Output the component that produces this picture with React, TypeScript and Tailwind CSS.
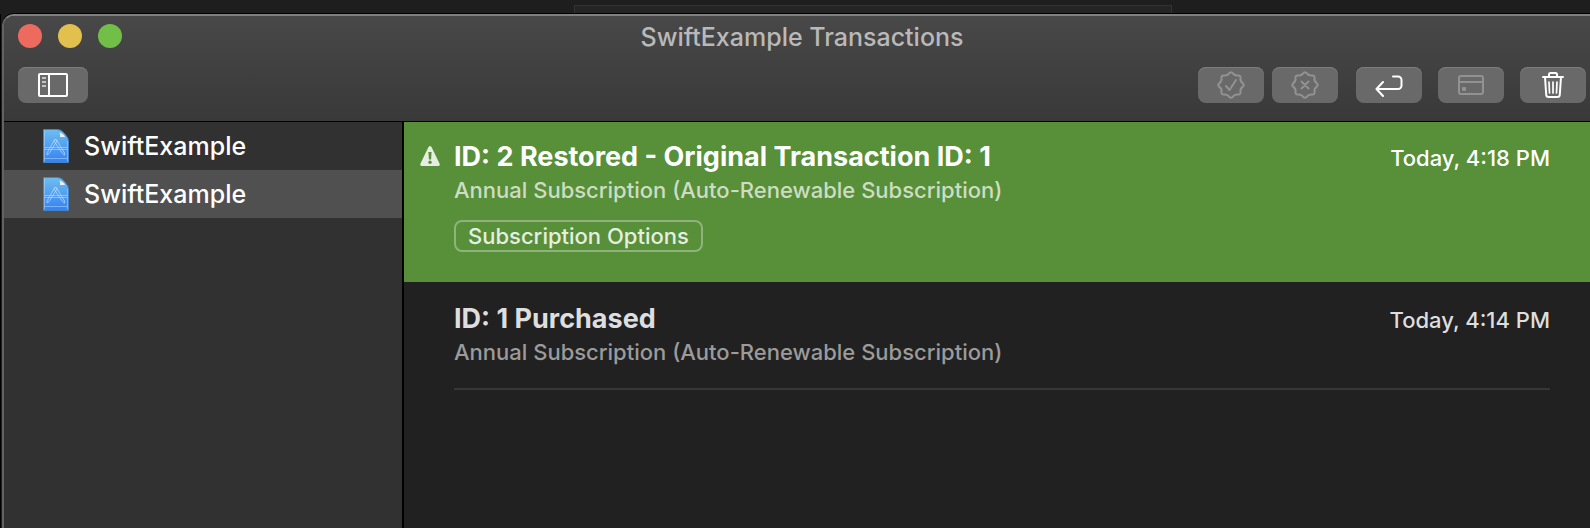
import type { ReactNode } from 'react'
import clsx from 'clsx'

interface Transaction {
  title: string
  subtitle: string
  date: string
  selected: boolean
  subscription: boolean
}

const apps = [
  { id: 1, name: 'SwiftExample', selected: false },
  { id: 2, name: 'SwiftExample', selected: true },
]

const transactions: Transaction[] = [
  {
    title: 'ID: 2 Restored - Original Transaction ID: 1',
    subtitle: 'Annual Subscription (Auto-Renewable Subscription)',
    date: 'Today, 4:18 PM',
    selected: true,
    subscription: true,
  },
  {
    title: 'ID: 1 Purchased',
    subtitle: 'Annual Subscription (Auto-Renewable Subscription)',
    date: 'Today, 4:14 PM',
    selected: false,
    subscription: false,
  },
]

// Eight-lobed seal outline, smoothed through the midpoints of a star
function sealPath(cx: number, cy: number, outer: number, inner: number) {
  const points = Array.from({ length: 16 }, (_, i) => {
    const r = i % 2 === 0 ? outer : inner
    const a = (i * Math.PI) / 8 - Math.PI / 2
    return [cx + r * Math.cos(a), cy + r * Math.sin(a)]
  })
  const mid = (i: number) => {
    const [a, b] = [points[i % 16], points[(i + 1) % 16]]
    return `${((a[0] + b[0]) / 2).toFixed(2)} ${((a[1] + b[1]) / 2).toFixed(2)}`
  }
  const curves = points.map((_, i) => {
    const p = points[(i + 1) % 16]
    return `Q${p[0].toFixed(2)} ${p[1].toFixed(2)} ${mid(i + 1)}`
  })
  return `M${mid(0)}${curves.join('')}Z`
}

function SealIcon({ children }: { children: ReactNode }) {
  return (
    <svg width="28" height="28" viewBox="0 0 28 28" fill="none" stroke="#929292" strokeWidth="2" strokeLinecap="round" strokeLinejoin="round">
      <path d={sealPath(14, 14, 14, 9.8)} />
      {children}
    </svg>
  )
}

function SidebarIcon() {
  return (
    <svg width="30" height="24" viewBox="0 0 30 24" fill="none">
      <rect x="1" y="1" width="28" height="22" rx="1" stroke="#fff" strokeWidth="2" />
      <path d="M11 1v22" stroke="#fff" strokeWidth="2" />
      <path d="M4 5h4M4 9h4M4 13h4" stroke="#c4c4c4" strokeWidth="2" />
    </svg>
  )
}

function ReturnIcon() {
  return (
    <svg width="28" height="24" viewBox="0 0 28 24" fill="none" stroke="#fff" strokeWidth="2" strokeLinecap="round" strokeLinejoin="round">
      <path d="M8 9 1.5 16 8 23M2 16h21a3.500 3.500 0 0 0 3.500-3.500V7A3.500 3.500 0 0 0 23 3.500h-5" />
    </svg>
  )
}

function CardIcon() {
  return (
    <svg width="26" height="20" viewBox="0 0 26 20" fill="none" stroke="#929292" strokeWidth="2">
      <rect x="1" y="1" width="24" height="18" rx="2" />
      <path d="M1 7h24" />
      <rect x="4" y="12" width="4" height="4" rx="1" fill="#929292" stroke="none" />
    </svg>
  )
}

function TrashIcon() {
  return (
    <svg width="22" height="26" viewBox="0 0 22 26" fill="none" stroke="#fff" strokeWidth="2" strokeLinecap="round" strokeLinejoin="round">
      <path d="M1 5h20M7 5V2.500A1.500 1.500 0 0 1 8.500 1h5A1.500 1.500 0 0 1 15 2.500V5" />
      <path d="m3 5 1.200 17.500A2.500 2.500 0 0 0 6.700 25h8.600a2.500 2.500 0 0 0 2.500-2.500L19 5" />
      <path d="m7 10 .5 11M11 10v11M15 10l-.5 11" strokeWidth="1.700" />
    </svg>
  )
}

function ProjectIcon() {
  return (
    <svg width="26" height="34" viewBox="0 0 26 34" fill="none">
      <defs>
        <linearGradient id="doc" x1="0" y1="0" x2="0" y2="1">
          <stop offset="0" stopColor="#6fbdf0" />
          <stop offset="1" stopColor="#3681f2" />
        </linearGradient>
      </defs>
      <path d="M.5.500H14q4 0 6.500 3l2.500 3q2.500 2.500 2.500 6v21H.5z" fill="url(#doc)" stroke="#3f86c9" />
      <path d="M16.500 3.500q1 2.500.5 4.500h5q-1-3-5.500-4.500z" fill="#e9f1f7" />
      <g stroke="#b5dcfb" strokeOpacity=".85">
        <path d="M1.500 1.500v31M24.500 12v20.500M1.500 29.500h23" strokeOpacity=".5" />
        <path d="M2 18.500h22M2 20.500h22" strokeOpacity=".6" />
        <path d="m12 10-8 14v2l2-1.500 8-12.500zM13 10l8.500 14v2l-2-1.500L11 12z" strokeWidth=".9" />
      </g>
    </svg>
  )
}

function WarningIcon() {
  return (
    <svg width="20" height="20" viewBox="0 0 20 20" role="img" aria-label="Warning">
      <path d="M8.500 1q1.500-2 3 0l8 16.500q.9 2.500-1.500 2.500H2q-2.400 0-1.500-2.500z" fill="#e6eee1" />
      <path d="M8.400 6h3.200l-.5 7.500H8.900z" fill="#588f39" />
      <circle cx="10" cy="16.300" r="1.700" fill="#588f39" />
    </svg>
  )
}

interface ToolbarButtonProps {
  label: string
  wide?: boolean
  disabled?: boolean
  children: ReactNode
}

function ToolbarButton({ label, wide, disabled, children }: ToolbarButtonProps) {
  return (
    <button
      type="button"
      aria-label={label}
      disabled={disabled}
      className={clsx(
        'flex h-9 items-center justify-center rounded-lg bg-[#696969] shadow-[inset_0_1px_0_#7d7d7d]',
        wide ? 'w-[70px]' : 'w-[66px]',
      )}
    >
      {children}
    </button>
  )
}

function TitleBar() {
  return (
    <header className="border-b border-black bg-linear-to-b from-[#484848] to-[#393939]">
      <div className="grid h-[50px] grid-cols-[1fr_auto_1fr] items-center pr-1 pl-[14px]">
        <div className="flex gap-4 pb-2.5">
          <button type="button" aria-label="Close" className="size-6 rounded-full bg-[#ed6a5e]" />
          <button type="button" aria-label="Minimize" className="size-6 rounded-full bg-[#e1c04d]" />
          <button type="button" aria-label="Zoom" className="size-6 rounded-full bg-[#72bf47]" />
        </div>
        <h1 className="pb-2 text-[25px] leading-8 font-medium text-[#b9b9b9]">SwiftExample Transactions</h1>
      </div>
      <div className="flex items-start justify-between pt-px pr-1 pb-[18px] pl-[14px]">
        <ToolbarButton label="Toggle sidebar" wide>
          <SidebarIcon />
        </ToolbarButton>
        <div className="flex items-center">
          <div className="mr-[18px] flex gap-2">
            <ToolbarButton label="Approve transaction" disabled>
              <SealIcon>
                <path d="m9 15 3.500 4L19 9" />
              </SealIcon>
            </ToolbarButton>
            <ToolbarButton label="Decline transaction" disabled>
              <SealIcon>
                <path d="m10.500 10.500 7 7M17.500 10.500l-7 7" />
              </SealIcon>
            </ToolbarButton>
          </div>
          <div className="flex gap-4">
            <ToolbarButton label="Refund">
              <ReturnIcon />
            </ToolbarButton>
            <ToolbarButton label="Payment" disabled>
              <CardIcon />
            </ToolbarButton>
            <ToolbarButton label="Delete">
              <TrashIcon />
            </ToolbarButton>
          </div>
        </div>
      </div>
    </header>
  )
}

function Sidebar() {
  return (
    <nav className="w-[400px] shrink-0 border-r-2 border-black bg-[#313131]">
      {apps.map(app => (
        <button
          key={app.id}
          type="button"
          className={clsx(
            'flex h-12 w-full items-center gap-[15px] pl-[39px] text-[25px] leading-8 font-medium text-white',
            app.selected && 'bg-[#505050]',
          )}
        >
          <ProjectIcon />
          {app.name}
        </button>
      ))}
    </nav>
  )
}

function TransactionRow({ transaction }: { transaction: Transaction }) {
  const { title, subtitle, date, selected, subscription } = transaction

  return (
    <li className={clsx('flex pr-10', selected ? 'bg-[#588f39] pt-[18px] pb-[30px]' : 'pt-5')}>
      <div className="flex h-8 w-[50px] shrink-0 items-center pl-4">
        {selected && <WarningIcon />}
      </div>
      <div className={clsx('min-w-0 flex-1', !selected && 'border-b-2 border-[#373737] pb-5')}>
        <div className="flex h-[34px] items-baseline justify-between">
          <h2 className={clsx('text-[27px] leading-[34px] font-bold', selected ? 'text-white' : 'text-[#dedede]')}>
            {title}
          </h2>
          <time className={clsx('text-[22px] leading-7 font-medium', selected ? 'text-white' : 'text-[#dedede]')}>
            {date}
          </time>
        </div>
        <p className={clsx('text-[22px] leading-8 font-medium', selected ? 'text-[#cdddc4]' : 'text-[#9b9b9b]')}>
          {subtitle}
        </p>
        {subscription && (
          <button
            type="button"
            className="mt-3.5 flex h-8 items-center rounded-lg border-2 border-[#8fb47b] px-3 text-[22px] leading-7 font-medium text-[#e6eee1]"
          >
            Subscription Options
          </button>
        )}
      </div>
    </li>
  )
}

export default function App() {
  return (
    <div className="flex min-h-screen flex-col bg-[#1e1e1e] font-['Inter',sans-serif]">
      <div className="flex h-[14px] items-end">
        <div className="ml-[574px] h-[9px] w-[598px] border border-b-0 border-[#333333] bg-[#242424]" />
      </div>
      <div className="flex flex-1 border-l border-black pl-px">
        <div className="flex flex-1 flex-col overflow-hidden rounded-tl-xl border-t-2 border-l-2 border-t-[#808080] border-l-[#626262] bg-[#212121] shadow-[0_-1px_0_#000]">
          <TitleBar />
          <div className="flex flex-1">
            <Sidebar />
            <main className="flex-1 bg-[#212121]">
              <ul>
                {transactions.map(transaction => (
                  <TransactionRow key={transaction.title} transaction={transaction} />
                ))}
              </ul>
            </main>
          </div>
        </div>
      </div>
    </div>
  )
}
